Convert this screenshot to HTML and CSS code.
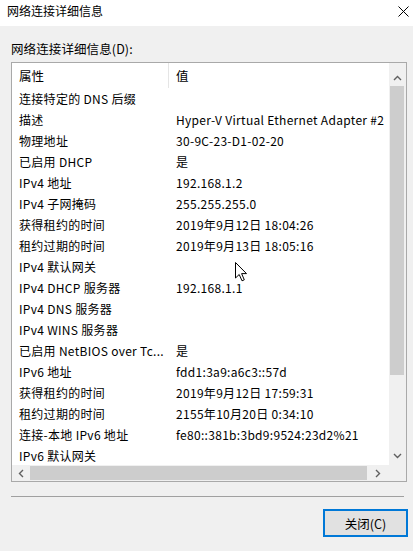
FILE: index.html
```html
<!DOCTYPE html>
<html lang="zh-CN">
<head>
<meta charset="utf-8">
<title>网络连接详细信息</title>
<link rel="stylesheet" href="styles.css">
</head>
<body>
<div class="window">
  <div class="titlebar">
    <span class="title">网络连接详细信息</span>
    <svg class="close" width="11" height="11" viewBox="0 0 11 11"><path d="M0.5 0.5 L10.5 10.5 M10.5 0.5 L0.5 10.5" stroke="#000" stroke-width="1" fill="none"/></svg>
  </div>
  <div class="body">
    <div class="label">网络连接详细信息(D):</div>
    <div class="listbox">
      <div class="view">
        <div class="header">
          <div class="hcell c1">属性</div>
          <div class="hcell c2">值</div>
        </div>
        <div class="row"><div class="c1">连接特定的 DNS 后缀</div><div class="c2"></div></div>
        <div class="row"><div class="c1">描述</div><div class="c2">Hyper-V Virtual Ethernet Adapter #2</div></div>
        <div class="row"><div class="c1">物理地址</div><div class="c2">30-9C-23-D1-02-20</div></div>
        <div class="row"><div class="c1">已启用 DHCP</div><div class="c2">是</div></div>
        <div class="row"><div class="c1">IPv4 地址</div><div class="c2">192.168.1.2</div></div>
        <div class="row"><div class="c1">IPv4 子网掩码</div><div class="c2">255.255.255.0</div></div>
        <div class="row"><div class="c1">获得租约的时间</div><div class="c2">2019年9月12日 18:04:26</div></div>
        <div class="row"><div class="c1">租约过期的时间</div><div class="c2">2019年9月13日 18:05:16</div></div>
        <div class="row"><div class="c1">IPv4 默认网关</div><div class="c2"></div></div>
        <div class="row"><div class="c1">IPv4 DHCP 服务器</div><div class="c2">192.168.1.1</div></div>
        <div class="row"><div class="c1">IPv4 DNS 服务器</div><div class="c2"></div></div>
        <div class="row"><div class="c1">IPv4 WINS 服务器</div><div class="c2"></div></div>
        <div class="row"><div class="c1">已启用 NetBIOS over Tc...</div><div class="c2">是</div></div>
        <div class="row"><div class="c1">IPv6 地址</div><div class="c2">fdd1:3a9:a6c3::57d</div></div>
        <div class="row"><div class="c1">获得租约的时间</div><div class="c2">2019年9月12日 17:59:31</div></div>
        <div class="row"><div class="c1">租约过期的时间</div><div class="c2">2155年10月20日 0:34:10</div></div>
        <div class="row"><div class="c1">连接-本地 IPv6 地址</div><div class="c2">fe80::381b:3bd9:9524:23d2%21</div></div>
        <div class="row"><div class="c1">IPv6 默认网关</div><div class="c2"></div></div>
        <svg class="cursor" width="13" height="20" viewBox="0 0 13 20"><path d="M0.5 0.5 L0.5 16 L4.2 12.5 L7 18.8 L9.3 17.8 L6.6 11.6 L11.5 11.6 Z" fill="#fff" stroke="#000" stroke-width="1" stroke-linejoin="miter"/></svg>
      </div>
      <div class="vscroll">
        <div class="sbtn up"><svg width="9" height="6" viewBox="0 0 9 6"><path d="M1 5 L4.5 1.5 L8 5" stroke="#606060" stroke-width="1.4" fill="none"/></svg></div>
        <div class="vthumb"></div>
        <div class="vtrack"></div>
        <div class="sbtn down"><svg width="9" height="6" viewBox="0 0 9 6"><path d="M1 1 L4.5 4.5 L8 1" stroke="#606060" stroke-width="1.4" fill="none"/></svg></div>
      </div>
      <div class="hscroll">
        <div class="hbtn"><svg width="6" height="9" viewBox="0 0 6 9"><path d="M5 1 L1.5 4.5 L5 8" stroke="#606060" stroke-width="1.4" fill="none"/></svg></div>
        <div class="hthumb"></div>
        <div class="hbtn"><svg width="6" height="9" viewBox="0 0 6 9"><path d="M1 1 L4.5 4.5 L1 8" stroke="#606060" stroke-width="1.4" fill="none"/></svg></div>
      </div>
      <div class="corner"></div>
    </div>
    <div class="separator"></div>
    <div class="actions">
      <button class="btn">关闭(C)</button>
    </div>
  </div>
</div>
</body>
</html>
```
FILE: styles.css
```css
html, body {
  margin: 0;
  padding: 0;
}
body {
  width: 413px;
  height: 551px;
  overflow: hidden;
  background: #f0f0f0;
  font-family: "Noto Sans CJK SC", "Noto Sans", sans-serif;
  font-size: 12px;
  color: #000;
}
.window {
  display: flex;
  flex-direction: column;
  height: 551px;
}
.titlebar {
  height: 26px;
  background: #fff;
  display: flex;
  align-items: center;
  justify-content: space-between;
  padding: 0 4px 4px 7px;
  box-sizing: border-box;
}
.title {
  font-size: 12px;
  line-height: 16px;
}
.close {
  display: block;
}
.body {
  display: flex;
  flex-direction: column;
  padding: 0 6px 0 11px;
}
.label {
  margin-top: 14px;
  height: 18px;
  line-height: 18px;
  font-size: 12.5px;
  letter-spacing: 0.1px;
  margin-bottom: 4px;
}
.listbox {
  height: 420px;
  box-sizing: border-box;
  border: 1px solid #a9a9a9;
  background: #fff;
  display: grid;
  grid-template-columns: 1fr 17px;
  grid-template-rows: 402px 16px;
}
.view {
  position: relative;
  overflow: hidden;
  padding-right: 0;
}
.header {
  display: flex;
  height: 25px;
  align-items: center;
}
.hcell {
  height: 25px;
  line-height: 25px;
}
.header .c1 {
  border-right: 1px solid #e5e5e5;
  box-sizing: border-box;
  font-size: 12.5px;
}
.header .c2 {
  font-size: 12.5px;
}
.row {
  display: flex;
  height: 21px;
  line-height: 21px;
  white-space: nowrap;
  letter-spacing: 0.3px;
}
.c1 {
  width: 157px;
  flex: none;
  padding-left: 7px;
  box-sizing: border-box;
  overflow: hidden;
}
.c2 {
  padding-left: 7px;
}
.cursor {
  position: absolute;
  left: 223px;
  top: 199px;
}
.vscroll {
  background: #f0f0f0;
  display: flex;
  flex-direction: column;
}
.sbtn {
  display: flex;
  align-items: center;
  justify-content: center;
  flex: none;
}
.sbtn.up {
  height: 23px;
  align-items: flex-end;
  padding-bottom: 5px;
  box-sizing: border-box;
}
.sbtn.down {
  height: 18px;
}
.vthumb {
  height: 289px;
  background: #cdcdcd;
  margin: 0 2px 0 1px;
  flex: none;
}
.vtrack {
  flex: 1;
}
.hscroll {
  background: #f0f0f0;
  display: flex;
  align-items: stretch;
}
.hbtn {
  width: 17px;
  flex: none;
  display: flex;
  align-items: center;
  justify-content: center;
}
.hthumb {
  width: 337px;
  background: #cdcdcd;
  margin: 1px 0 1px 1px;
  flex: none;
}
.hscroll .hbtn:last-child {
  margin-left: auto;
  width: 22px;
}
.corner {
  background: #f0f0f0;
}
.separator {
  margin-top: 14px;
  height: 1px;
  background: #a0a0a0;
  margin-right: 3px;
}
.actions {
  display: flex;
  justify-content: flex-end;
  margin-top: 12px;
}
.btn {
  width: 85px;
  height: 28px;
  box-sizing: border-box;
  border: 2px solid #0078d7;
  background: #e1e1e1;
  font-family: "Noto Sans CJK SC", "Noto Sans", sans-serif;
  font-size: 12.5px;
  color: #000;
  padding: 0;
  margin-right: -1px;
}
```
